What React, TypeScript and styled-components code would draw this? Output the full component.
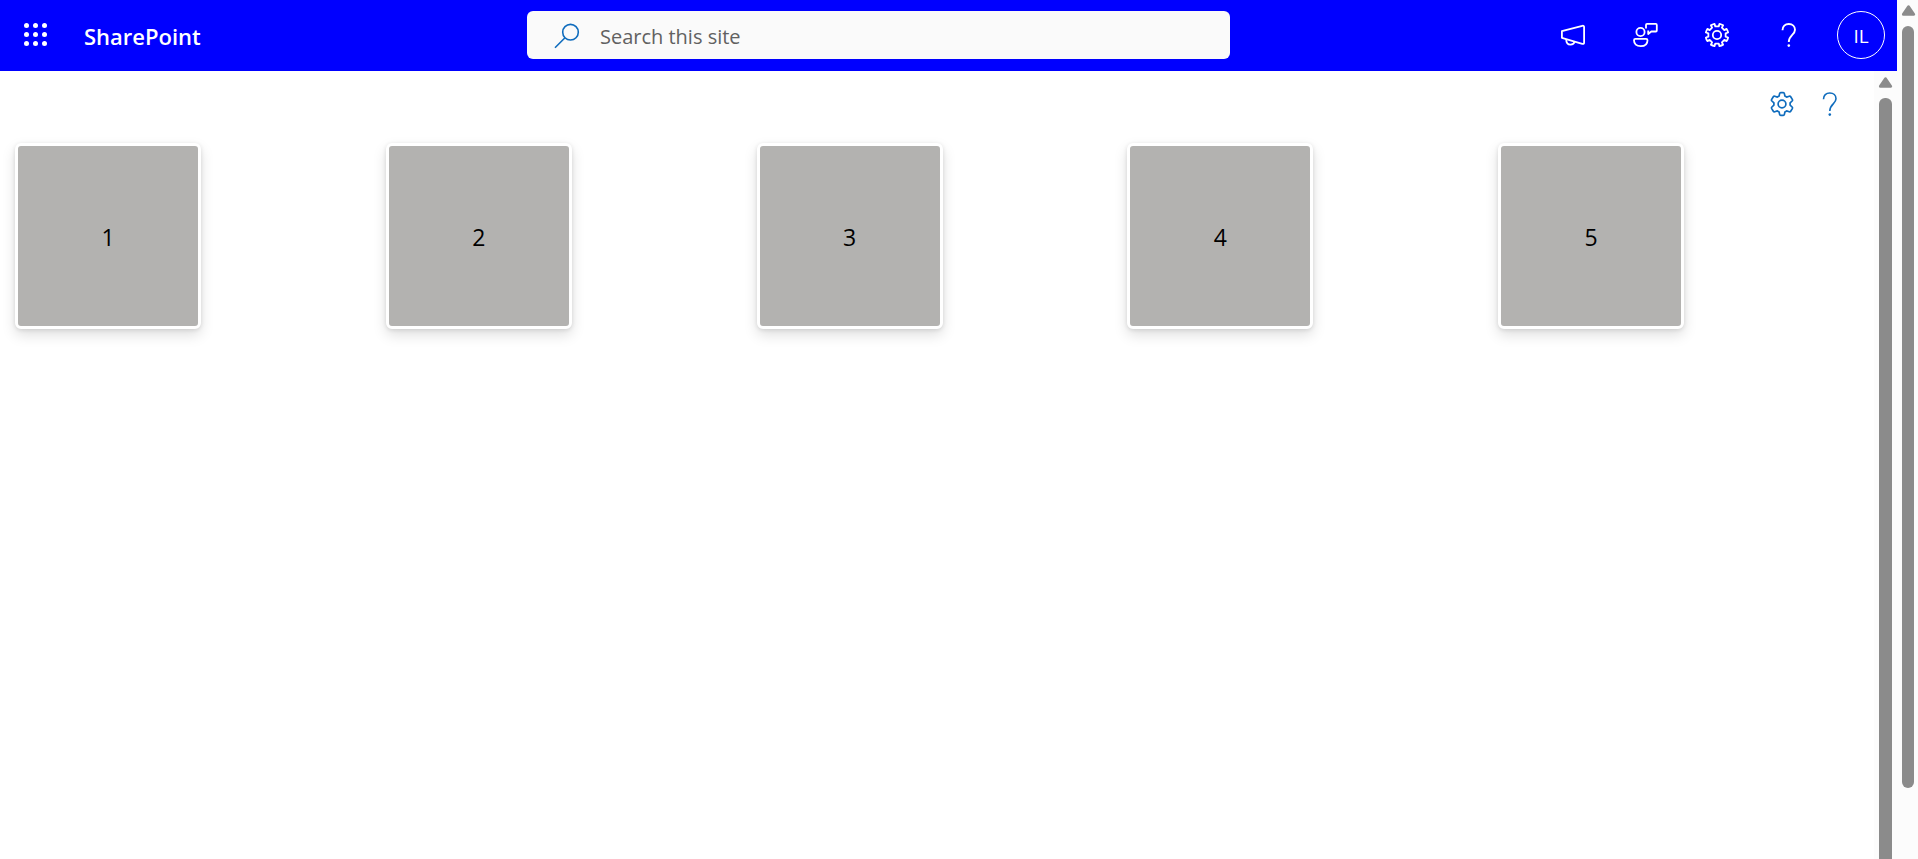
import React from "react";
import styled, { createGlobalStyle } from "styled-components";

const GlobalStyle = createGlobalStyle`
  *, *::before, *::after { box-sizing: border-box; }
  body {
    margin: 0;
    overflow: hidden;
    background: #ffffff;
    color: #000000;
    font-family: "Segoe UI", "Open Sans", "Noto Sans", sans-serif;
  }
`;

const Page = styled.div`
  display: flex;
  height: 100vh;
`;

const Frame = styled.div`
  flex: 1;
  min-width: 0;
  display: flex;
  flex-direction: column;
`;

const SuiteHeader = styled.header`
  flex: 0 0 71px;
  display: grid;
  grid-template-columns: minmax(0, 30fr) minmax(0, 40fr) minmax(360px, 38fr);
  align-items: center;
  padding-bottom: 1px;
  background: #0000ff;
  color: #ffffff;
`;

const Brand = styled.div`
  display: flex;
  align-items: center;
`;

const BrandLink = styled.a`
  padding: 2px 0 0 12px;
  color: inherit;
  font-size: 22px;
  line-height: 32px;
  font-weight: 600;
  text-decoration: none;
`;

const HeaderButton = styled.button`
  flex: 0 0 72px;
  height: 70px;
  display: flex;
  align-items: center;
  justify-content: center;
  padding: 0;
  border: 0;
  background: transparent;
  color: inherit;
  font-family: inherit;
  cursor: pointer;
`;

const SearchBox = styled.form`
  display: flex;
  align-items: center;
  gap: 20px;
  height: 48px;
  padding: 2px 27px 0;
  border-radius: 6px;
  background: #fafafa;
  color: #0f6cbd;
`;

const SearchInput = styled.input`
  flex: 1;
  min-width: 0;
  padding: 1px 0 0;
  border: 0;
  outline: 0;
  background: transparent;
  color: #242424;
  font-family: inherit;
  font-size: 20px;
  line-height: 28px;
  &::placeholder { color: #616161; opacity: 1; }
`;

const Actions = styled.nav`
  display: flex;
  justify-content: flex-end;
`;

const Avatar = styled.span`
  display: flex;
  align-items: center;
  justify-content: center;
  width: 48px;
  height: 48px;
  padding-top: 2px;
  border: 1px solid #ffffff;
  border-radius: 50%;
  font-size: 19px;
  line-height: 24px;
`;

const Body = styled.div`
  flex: 1;
  min-height: 0;
  display: flex;
`;

const Content = styled.main`
  flex: 1;
  min-width: 0;
`;

const Toolbar = styled.div`
  display: flex;
  justify-content: flex-end;
  padding: 9px 20px 0 0;
  color: #0f6cbd;
`;

const ToolButton = styled.button`
  display: flex;
  align-items: center;
  justify-content: center;
  width: 48px;
  height: 48px;
  padding: 0;
  border: 0;
  background: transparent;
  color: inherit;
  cursor: pointer;
`;

const CardGrid = styled.section`
  display: grid;
  grid-template-columns: repeat(5, minmax(0, 1fr));
  padding: 15px 5px 15px 15px;
`;

const Card = styled.article`
  display: flex;
  align-items: center;
  justify-content: center;
  width: 186px;
  height: 186px;
  padding-top: 2px;
  border: 3px solid #ffffff;
  border-radius: 6px;
  background: #b3b2b0;
  box-shadow: 0 6px 14px rgba(0, 0, 0, 0.13), 0 1px 4px rgba(0, 0, 0, 0.11);
  font-size: 23px;
  line-height: 32px;
`;

const Track = styled.div<{ $width: number }>`
  flex: 0 0 ${(p) => p.$width}px;
  display: flex;
  flex-direction: column;
  align-items: center;
  gap: 10px;
  padding-top: ${(p) => (p.$width > 22 ? 6 : 5)}px;
  padding-left: ${(p) => (p.$width > 22 ? 0 : 1)}px;
  background: #fcfcfc;
`;

const OuterThumb = styled.div`
  width: 12px;
  height: calc(100vh - 97px);
  border-radius: 6px;
  background: #8b8b8b;
`;

const InnerThumb = styled.div`
  flex: 1;
  width: 13px;
  border-radius: 6px 6px 0 0;
  background: #8b8b8b;
`;

const ArrowUp = () => (
  <svg width="15" height="11" viewBox="0 0 15 11" aria-hidden="true">
    <path d="M7.5 1.8 12.6 9.3H2.4Z" fill="#8b8b8b" stroke="#8b8b8b" strokeWidth="3" strokeLinejoin="round" />
  </svg>
);

const Icon = ({ children, width = 1.8 }: { children: React.ReactNode; width?: number }) => (
  <svg
    width="26"
    height="26"
    viewBox="0 0 26 26"
    fill="none"
    stroke="currentColor"
    strokeWidth={width}
    strokeLinejoin="round"
    aria-hidden="true"
  >
    {children}
  </svg>
);

/** Outline of a cog; tip and base are the half-widths of a tooth as fractions of its pitch. */
function cog(teeth: number, outer: number, root: number, tip: number, base: number, start = 0) {
  const pitch = (2 * Math.PI) / teeth;
  const pt = (r: number, a: number) => `${(13 + r * Math.sin(a)).toFixed(2)} ${(13 - r * Math.cos(a)).toFixed(2)}`;
  let d = "";
  for (let i = 0; i < teeth; i++) {
    const a = (i + start) * pitch;
    d += `${i ? "L" : "M"}${pt(root, a - base * pitch)}L${pt(outer, a - tip * pitch)}`;
    d += `A${outer} ${outer} 0 0 1 ${pt(outer, a + tip * pitch)}L${pt(root, a + base * pitch)}`;
  }
  return d + "Z";
}

const Question = ({ width = 1.9 }: { width?: number }) => (
  <Icon width={width}>
    <path d="M6.5 8.2C6.5 4.4 9.1 2 12.8 2s6.2 2.3 6.2 5.8c0 5-6.2 5.5-6.2 12.2" />
    <circle cx="12.8" cy="23.6" r="1.3" fill="currentColor" stroke="none" />
  </Icon>
);

const Waffle = () => (
  <Icon>
    {[3.5, 12.5, 21.5].map((y) =>
      [3.5, 12.5, 21.5].map((x) => <circle key={`${x}-${y}`} cx={x} cy={y} r="2.5" fill="currentColor" stroke="none" />)
    )}
  </Icon>
);

export default function App() {
  return (
    <>
      <GlobalStyle />
      <Page>
        <Frame>
          <SuiteHeader>
            <Brand>
              <HeaderButton type="button" aria-label="App launcher">
                <Waffle />
              </HeaderButton>
              <BrandLink href="#">SharePoint</BrandLink>
            </Brand>
            <SearchBox role="search">
              <Icon width={1.6}>
                <circle cx="16.5" cy="9.2" r="7.8" />
                <path d="M11 14.7 1 24.7" />
              </Icon>
              <SearchInput type="text" placeholder="Search this site" aria-label="Search this site" />
            </SearchBox>
            <Actions aria-label="Account and settings">
              <HeaderButton type="button" aria-label="Announcements">
                <Icon>
                  <path d="M1.9 9.2 22.3 3.8Q24.1 3.4 24.1 5V20.5Q24.1 22.3 22.3 21.9L1.9 15.8Z" />
                  <path d="M6.2 17.2C6.2 21 8.4 22.6 10.6 22.6c2 0 3.6-1 4.2-3" />
                </Icon>
              </HeaderButton>
              <HeaderButton type="button" aria-label="Feedback">
                <Icon>
                  <circle cx="8.5" cy="10" r="4.1" />
                  <path d="M3.4 16.8h10.7q1.4 0 1.4 1.4c0 3.9-2.6 6-6.8 6S2 22.1 2 18.2q0-1.4 1.4-1.4Z" />
                  <path d="M14 6.5V2.9q0-1 1-1h8.8q1 0 1 1v5.6q0 1-1 1H19.3L16.2 12V8.500" />
                </Icon>
              </HeaderButton>
              <HeaderButton type="button" aria-label="Settings">
                <Icon>
                  <path d={cog(8, 11.4, 8.8, 0.22, 0.25, 0.5)} />
                  <circle cx="13" cy="13" r="4.2" />
                </Icon>
              </HeaderButton>
              <HeaderButton type="button" aria-label="Help">
                <Question />
              </HeaderButton>
              <HeaderButton type="button" aria-label="Account manager for IL">
                <Avatar>IL</Avatar>
              </HeaderButton>
            </Actions>
          </SuiteHeader>
          <Body>
            <Content>
              <Toolbar>
                <ToolButton type="button" aria-label="Web part settings">
                  <Icon width={1.7}>
                    <path d="M10.6 2.6Q10.8 1.7 11.7 1.7H14.3Q15.2 1.7 15.4 2.6L15.9 5.1L17.6 6.1L20.2 5.3Q21.2 5 21.7 5.8L23.3 8.4Q23.8 9.3 23.1 10L21.1 11.9V14.1L23.1 16Q23.8 16.7 23.3 17.6L21.7 20.2Q21.2 21 20.2 20.7L17.6 19.9L15.9 20.9L15.4 23.4Q15.2 24.3 14.3 24.3H11.7Q10.8 24.3 10.6 23.4L10.1 20.9L8.4 19.9L5.8 20.7Q4.8 21 4.3 20.2L2.7 17.6Q2.2 16.7 2.9 16L4.9 14.1V11.9L2.9 10Q2.2 9.3 2.7 8.4L4.3 5.8Q4.8 5 5.8 5.3L8.4 6.1L10.1 5.1Z" />
                    <circle cx="13" cy="13" r="3.9" />
                  </Icon>
                </ToolButton>
                <ToolButton type="button" aria-label="Web part help">
                  <Question width={1.6} />
                </ToolButton>
              </Toolbar>
              <CardGrid>
                {[1, 2, 3, 4, 5].map((n) => (
                  <Card key={n}>{n}</Card>
                ))}
              </CardGrid>
            </Content>
            <Track $width={23} aria-hidden="true">
              <ArrowUp />
              <InnerThumb />
            </Track>
          </Body>
        </Frame>
        <Track $width={21} aria-hidden="true">
          <ArrowUp />
          <OuterThumb />
        </Track>
      </Page>
    </>
  );
}
